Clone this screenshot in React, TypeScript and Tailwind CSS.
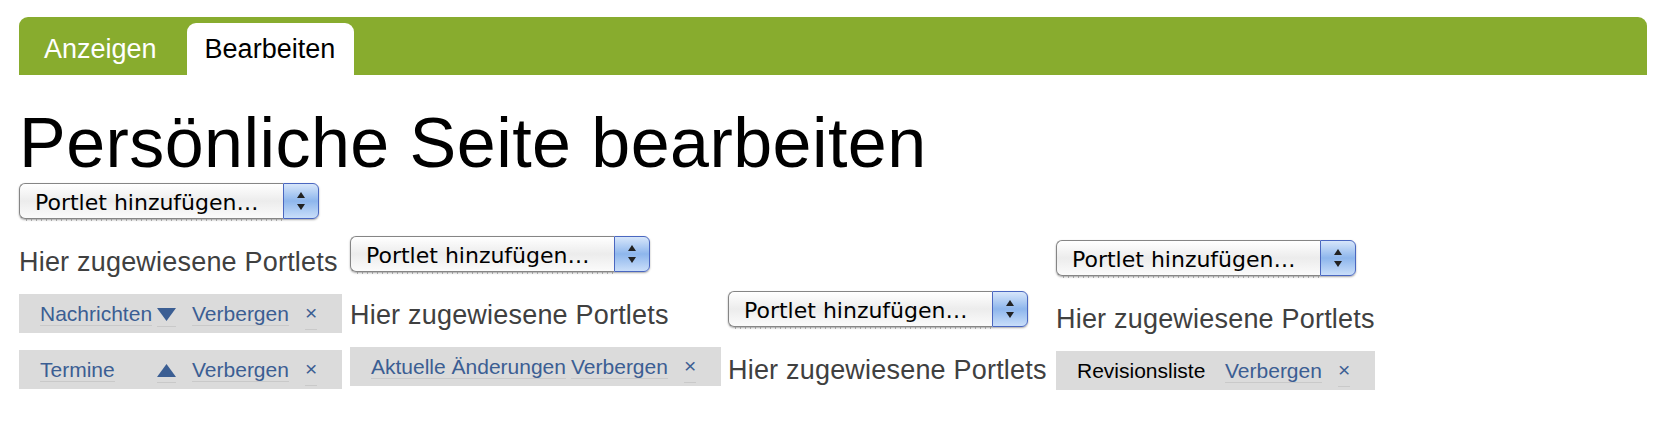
const columns = [
  {
    offset: "",
    width: "w-[331px]",
    portlets: [
      { name: "Nachrichten", link: true, arrow: "down", nameW: "w-[117px]", boxW: "w-[323px]" },
      { name: "Termine", link: true, arrow: "up", nameW: "w-[117px]", boxW: "w-[323px]" },
    ],
  },
  {
    offset: "mt-[53px]",
    width: "w-[378px]",
    portlets: [{ name: "Aktuelle Änderungen", link: true, arrow: "", nameW: "w-[200px]", boxW: "w-[371px]" }],
  },
  { offset: "mt-[108px]", width: "w-[328px]", portlets: [] },
  {
    offset: "mt-[57px]",
    width: "",
    portlets: [{ name: "Revisionsliste", link: false, arrow: "", nameW: "w-[148px]", boxW: "w-[319px]" }],
  },
];

function PortletSelect() {
  return (
    <div className="relative flex h-[36px] w-[300px] rounded-[6px] shadow-[0_1px_2px_rgba(0,0,0,0.35)]">
      <span className="flex flex-1 items-center rounded-l-[6px] border-y border-l border-[#858585] bg-linear-to-b from-white via-[#ececec] to-[#fbfbfb] pl-[15px] pt-[2px] font-['DejaVu_Sans',sans-serif] text-[22px] text-black">
        Portlet hinzufügen…
      </span>
      <span className="flex w-[36px] flex-col items-center justify-center gap-[6px] rounded-r-[6px] border border-[#4a67c0] bg-linear-to-b from-[#d7e6fa] via-[#8eb6ec] to-[#c9def9]">
        <svg width="8" height="6" viewBox="0 0 8 6" aria-hidden="true">
          <polygon points="4,0 8,6 0,6" fill="#222" />
        </svg>
        <svg width="8" height="6" viewBox="0 0 8 6" aria-hidden="true">
          <polygon points="0,0 8,0 4,6" fill="#222" />
        </svg>
      </span>
      {/* aqua tick marks along the bottom edge */}
      <span className="absolute bottom-[-2px] left-[7px] h-[3px] w-[256px] bg-[repeating-linear-gradient(90deg,#8a8a8a_0_1px,transparent_1px_5px)] opacity-70" />
    </div>
  );
}

function Arrow({ dir }: { dir: string }) {
  return (
    <span className="flex h-[25px] flex-col justify-end border-b border-[#c9c9c9] pb-[5px]">
      <svg width="19" height="13" viewBox="0 0 19 13" aria-hidden="true">
        {dir === "down" ? (
          <polygon points="0,0 19,0 9.5,13" fill="#3b5e93" />
        ) : (
          <polygon points="9.5,0 19,13 0,13" fill="#3b5e93" />
        )}
      </svg>
    </span>
  );
}

function Portlet({ p }: { p: (typeof columns)[number]["portlets"][number] }) {
  return (
    <div className={`flex h-[39px] items-center bg-[#dbdbdb] pl-[21px] text-[21px] ${p.boxW}`}>
      <span className={p.nameW}>
        {p.link ? (
          <span className="border-b border-[#c9c9c9] text-[#3b5e93]">{p.name}</span>
        ) : (
          <span className="text-black">{p.name}</span>
        )}
      </span>
      {p.arrow && (
        <span className="w-[35px]">
          <span className="inline-flex">
            <Arrow dir={p.arrow} />
          </span>
        </span>
      )}
      <span className="w-[113px]">
        <span className="border-b border-[#c9c9c9] text-[#3b5e93]">Verbergen</span>
      </span>
      <span className="border-b border-[#c9c9c9] text-[#3b5e93]">×</span>
    </div>
  );
}

export default function App() {
  return (
    <div className="min-h-screen bg-white font-['Liberation_Sans',Arial,sans-serif]">
      {/* Tabs */}
      <nav className="ml-[19px] mr-[18px] mt-[17px] flex h-[58px] items-end rounded-t-[9px] bg-[#88ac2e] pl-[5px]">
        <span className="flex h-[52px] items-center px-5 text-[27px] text-white">Anzeigen</span>
        <span className="ml-[10px] flex h-[52px] items-center rounded-t-[9px] bg-white pl-[18px] pr-[19px] text-[27px] text-black">
          Bearbeiten
        </span>
      </nav>

      <h1 className="ml-[19px] mt-[33px] text-[70px] leading-none tracking-[0.45px] text-black">
        Persönliche Seite bearbeiten
      </h1>

      <div className="ml-[19px] mt-[5px] flex items-start">
        {columns.map((col, i) => (
          <div key={i} className={`flex flex-col items-start ${col.width} ${col.offset}`}>
            <PortletSelect />
            <p className="mt-[28px] text-[27px] leading-[31px] tracking-[0.2px] text-[#404040]">
              Hier zugewiesene Portlets
            </p>
            <div className="mt-[16px] flex flex-col gap-[17px]">
              {col.portlets.map((p, j) => (
                <Portlet key={j} p={p} />
              ))}
            </div>
          </div>
        ))}
      </div>
    </div>
  );
}
